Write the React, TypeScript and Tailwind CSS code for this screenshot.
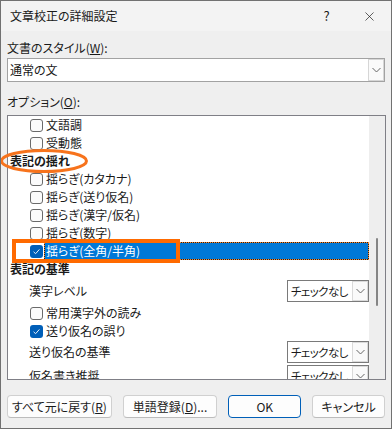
import { X } from 'lucide-react';

const font = "font-['Noto_Sans_CJK_JP','Noto_Sans',sans-serif] [font-feature-settings:'palt']";

function Chevron() {
  return (
    <svg width="9" height="6" viewBox="0 0 9 6">
      <path d="M0.5 1 L4.5 5 L8.5 1" fill="none" stroke="#666" strokeWidth="1" />
    </svg>
  );
}

function Box({ checked }: { checked?: boolean }) {
  if (checked) {
    return (
      <span className="flex h-[13px] w-[13px] shrink-0 items-center justify-center rounded-[3px] bg-[#005fb8]">
        <svg width="9" height="9" viewBox="0 0 9 9">
          <path d="M1.6 4.8 L3.6 6.7 L7.4 2.4" fill="none" stroke="#e8f0fa" strokeWidth="1" />
        </svg>
      </span>
    );
  }
  return <span className="h-[13px] w-[13px] shrink-0 rounded-[3px] border border-[#6a6a6a] bg-[#fbfbfb]" />;
}

function CheckRow({ label, checked }: { label: string; checked?: boolean }) {
  return (
    <div className="flex h-[18px] shrink-0 items-center pl-[22px]">
      <Box checked={checked} />
      <span className="ml-[3px] whitespace-nowrap text-[12px] leading-[18px]">{label}</span>
    </div>
  );
}

function Header({ label }: { label: string }) {
  return <div className="flex h-[18px] shrink-0 items-center pl-[2px] text-[12px] font-bold">{label}</div>;
}

function Select({ text }: { text: string }) {
  return (
    <div className="flex h-[22px] w-[82px] shrink-0 items-center border border-[#7a7a7a] bg-white">
      <span className="flex-1 overflow-hidden whitespace-nowrap pl-[3px] text-[11.5px] leading-[20px] tracking-[-0.6px]">
        {text}
      </span>
      <span className="flex h-[20px] w-[16px] shrink-0 items-center justify-center border border-[#dadada] bg-[#fafafa]">
        <Chevron />
      </span>
    </div>
  );
}

function SelectRow({ label, h }: { label: string; h: string }) {
  return (
    <div className={`flex shrink-0 items-center justify-between pl-[21px] ${h}`}>
      <span className="whitespace-nowrap text-[12px]">{label}</span>
      <Select text="チェックなし" />
    </div>
  );
}

function Btn({ w, children, primary }: { w: string; children: React.ReactNode; primary?: boolean }) {
  return (
    <div
      className={`flex h-[23px] items-center justify-center whitespace-nowrap rounded-[4px] border bg-[#fdfdfd] text-[12px] ${w} ${
        primary ? 'border-[#005fb8]' : 'border-[#d0d0d0] border-b-[#bcbcbc]'
      }`}
    >
      {children}
    </div>
  );
}

export default function App() {
  return (
    <div className={`relative h-[429px] w-[392px] overflow-hidden border border-[#717171] bg-[#efefef] text-[#1a1a1a] ${font}`}>
      {/* title bar */}
      <div className="flex h-[30px] items-center bg-[#f3f3f3]">
        <span className="pl-[9px] text-[12px]">文章校正の詳細設定</span>
        <span className="ml-auto flex w-[43px] justify-center text-[13px]">?</span>
        <span className="flex w-[43px] justify-center">
          <X size={15} strokeWidth={1.1} />
        </span>
      </div>

      <div className="flex flex-col px-[6px] pt-[9px]">
        <div className="h-[16px] text-[12px] leading-[16px]">
          文書のスタイル(<span className="underline">W</span>):
        </div>
        <div className="mt-[2px] flex h-[24px] items-center border border-[#a2a2a2] bg-white">
          <span className="flex-1 pl-[2px] text-[12px]">通常の文</span>
          <span className="flex h-[22px] w-[16px] items-center justify-center border border-[#d6d6d6] bg-[#fafafa]">
            <Chevron />
          </span>
        </div>

        <div className="mt-[12px] h-[16px] text-[12px] leading-[16px]">
          オプション(<span className="underline">O</span>):
        </div>

        <div className="-mr-[1px] mt-[5px] flex h-[265px] border border-[#7f7f86] bg-white">
          <div className="flex flex-1 flex-col overflow-hidden">
            <CheckRow label="文語調" />
            <CheckRow label="受動態" />
            <Header label="表記の揺れ" />
            <CheckRow label="揺らぎ(カタカナ)" />
            <CheckRow label="揺らぎ(送り仮名)" />
            <CheckRow label="揺らぎ(漢字/仮名)" />
            <CheckRow label="揺らぎ(数字)" />
            <div className="flex h-[18px] shrink-0 items-center pl-[22px]">
              <Box checked />
              <div className="ml-[1px] flex h-[18px] flex-1 bg-[#222]">
                <div className="flex flex-1 items-center border border-dotted border-[#ff8728] bg-[#0078d7] bg-clip-padding pl-[1px] text-[12px] text-white">
                  揺らぎ(全角/半角)
                </div>
              </div>
            </div>
            <Header label="表記の基準" />
            <SelectRow label="漢字レベル" h="h-[26px]" />
            <CheckRow label="常用漢字外の読み" />
            <CheckRow label="送り仮名の誤り" checked />
            <SelectRow label="送り仮名の基準" h="h-[24px]" />
            <SelectRow label="仮名書き推奨" h="h-[24px]" />
          </div>
          <div className="flex w-[16px] flex-col items-center bg-[#eeeeee] pt-[122px]">
            <div className="h-[68px] w-[2px] rounded-full bg-[#858585]" />
          </div>
        </div>

        <div className="mt-[15px] flex gap-[11px]">
          <Btn w="w-[105px]">
            すべて元に戻す(<span className="underline">R</span>)
          </Btn>
          <Btn w="w-[95px]">
            単語登録(<span className="underline">D</span>)...
          </Btn>
          <Btn w="w-[73px]" primary>
            OK
          </Btn>
          <Btn w="w-[73px]">キャンセル</Btn>
        </div>
      </div>

      {/* annotations */}
      <svg className="absolute left-[-1px] top-[147px]" width="90" height="26" viewBox="0 0 90 26">
        <ellipse cx="44" cy="13" rx="42.5" ry="10.5" fill="none" stroke="#f7731c" strokeWidth="3" />
      </svg>
      <div className="absolute left-[11px] top-[238px] h-[24px] w-[168px] border-4 border-[#ff6a00]" />
    </div>
  );
}
